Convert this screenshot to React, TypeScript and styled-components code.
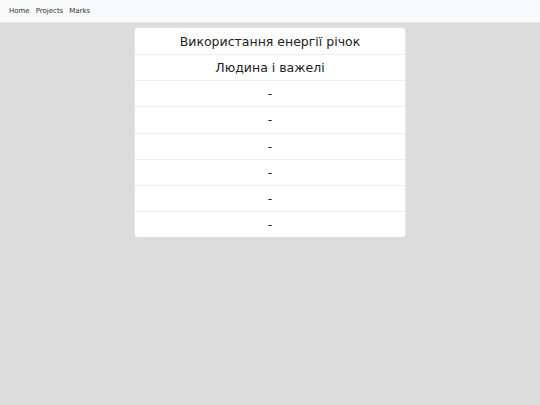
import { createGlobalStyle, styled } from "styled-components";

const GlobalStyle = createGlobalStyle`
  html, body {
    margin: 0;
    padding: 0;
    background: #dcdcdc;
    font-family: "DejaVu Sans", sans-serif;
  }
`;

const Nav = styled.nav`
  height: 23px;
  background: #f8f9fa;
  border-bottom: 1px solid #e5e5e5;
  display: flex;
  align-items: center;
  gap: 6px;
  padding: 0 9px;
  box-sizing: border-box;
  a {
    font-size: 7px;
    color: #333;
    text-decoration: none;
  }
`;

const Card = styled.section`
  width: 270px;
  margin: 5px auto 0;
  background: #fff;
  border-radius: 3px;
  box-shadow: 0 0 0 1px #e4e4e4;
`;

const Row = styled.div`
  height: 26.15px;
  box-sizing: border-box;
  display: flex;
  align-items: center;
  justify-content: center;
  font-size: 12.5px;
  color: #222;
  & + & {
    border-top: 1px solid #eeeeee;
  }
`;

const rows = ["Використання енергії річок", "Людина і важелі", "-", "-", "-", "-", "-", "-"];

const App = () => {
  return (
    <>
      <GlobalStyle />
      <Nav>
        <a href="#">Home</a>
        <a href="#">Projects</a>
        <a href="#">Marks</a>
      </Nav>
      <Card>
        {rows.map((r, i) => (
          <Row key={i}>{r}</Row>
        ))}
      </Card>
    </>
  );
};

export default App;
